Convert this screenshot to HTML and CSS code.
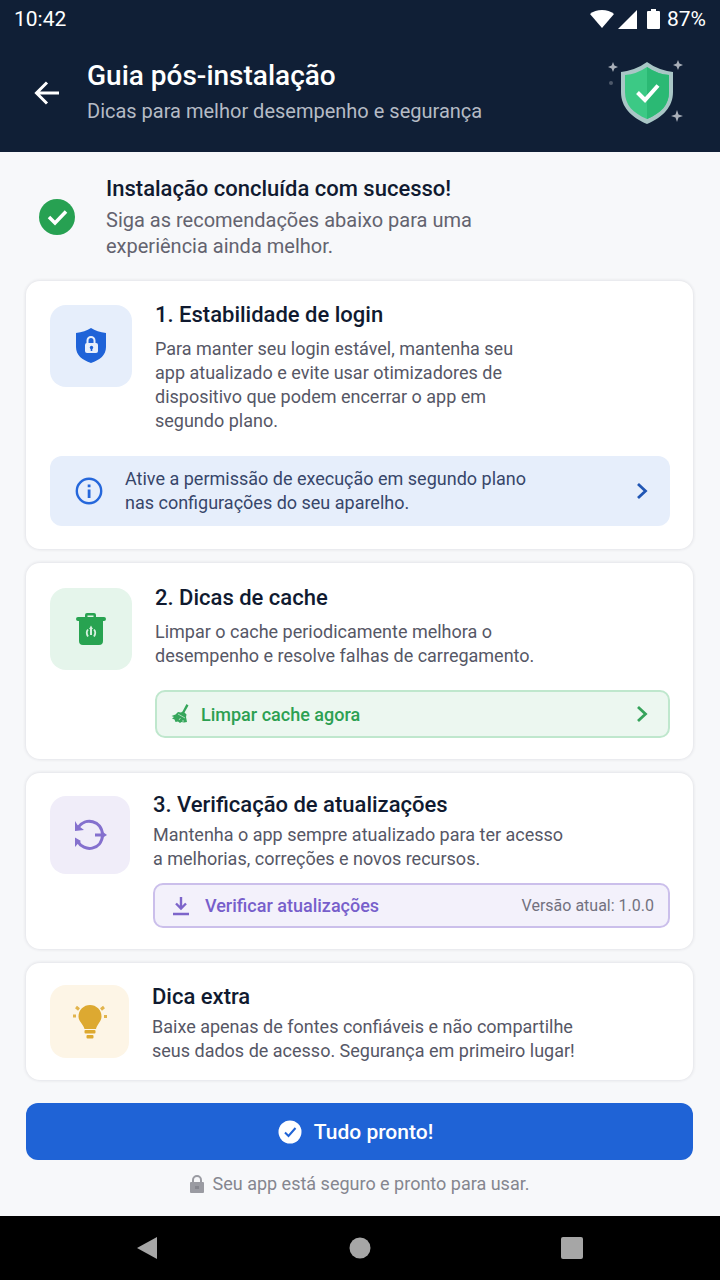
FILE: index.html
```html
<!DOCTYPE html>
<html lang="pt-BR">
<head>
    <meta charset="UTF-8">
    <meta name="viewport" content="width=device-width, initial-scale=1.0">
    <title>Guia pós-instalação</title>
    <link rel="stylesheet" href="styles.css">
</head>
<body>

<header class="top">
    <div class="status-bar">
        <span class="time">10:42</span>
        <div class="status-icons">
            <svg width="24" height="20" viewBox="0 0 24 20" fill="#fff"><path d="M0 5C6-.5 18-.5 24 5L12 19z"/></svg>
            <svg width="19" height="19" viewBox="0 0 19 19" fill="#fff"><path d="M19 0v19H0z"/></svg>
            <svg class="battery" width="13" height="20" viewBox="0 0 13 20" fill="#fff"><path d="M4 0h5v2h3q1 0 1 1v16q0 1-1 1H1q-1 0-1-1V3q0-1 1-1h3z"/></svg>
            <span>87%</span>
        </div>
    </div>
    <div class="title-bar">
        <button class="back" type="button" aria-label="Voltar">
            <svg width="26" height="24" viewBox="0 0 26 24" fill="none" stroke="#fff" stroke-width="3"><path d="M25 12H3M13 1.500L2.500 12 13 22.500"/></svg>
        </button>
        <div class="title-text">
            <h1>Guia pós-instalação</h1>
            <p>Dicas para melhor desempenho e segurança</p>
        </div>
        <svg class="hero-shield" width="80" height="70" viewBox="0 0 80 70">
            <path d="M40 4q11 8 26 10v20c0 15-10 25-26 32C24 59 14 49 14 34V14Q29 12 40 4z" fill="#a9c6c6"/>
            <path d="M40 9q10 7 22 8v17c0 13-8 21-22 27C26 55 18 47 18 34V17Q30 16 40 9z" fill="#3cc985"/>
            <path d="M40 9q10 7 22 8v17c0 13-8 21-22 27z" fill="#2bb974"/>
            <path d="M30.500 34.500l7.500 7.500 13-14.500" fill="none" stroke="#fff" stroke-width="4"/>
            <g fill="#a9afb9">
                <path d="M6 4l1.400 3.600L11 9l-3.600 1.400L6 14l-1.400-3.600L1 9l3.600-1.400z"/>
                <path d="M71 2l1.400 3.600L76 7l-3.600 1.400L71 12l-1.400-3.600L66 7l3.600-1.400z"/>
                <path d="M70 52l1.500 4.500L76 58l-4.500 1.500L70 64l-1.500-4.500L64 58l4.500-1.500z"/>
                <circle cx="4" cy="25" r="2" opacity=".4"/>
            </g>
        </svg>
    </div>
</header>

<main class="content">
    <section class="success">
        <svg width="36" height="36" viewBox="0 0 36 36"><circle cx="18" cy="18" r="18" fill="#27a152"/><path d="M10 18l6 6L27 12.500" fill="none" stroke="#fff" stroke-width="3.500"/></svg>
        <div>
            <h2>Instalação concluída com sucesso!</h2>
            <p>Siga as recomendações abaixo para uma<br>experiência ainda melhor.</p>
        </div>
    </section>

    <section class="card card-login">
        <div class="row">
            <div class="tile tile-blue">
                <svg width="32" height="36" viewBox="0 0 32 36">
                    <path d="M16 0q6 4 15 5v14c0 8-6 13-15 16C7 32 1 27 1 19V5q9-1 15-5z" fill="#1f63d8"/>
                    <rect x="10" y="15" width="13" height="10" rx="2" fill="#e8effb"/>
                    <path d="M12.500 16v-3.500a3.500 3.500 0 0 1 7 0V16" fill="none" stroke="#e8effb" stroke-width="2"/>
                    <circle cx="16.500" cy="19.500" r="1.700" fill="#1f63d8"/><path d="M15.700 20h1.600v3h-1.600z" fill="#1f63d8"/>
                </svg>
            </div>
            <div class="card-text">
                <h2>1. Estabilidade de login</h2>
                <p>Para manter seu login estável, mantenha seu<br>app atualizado e evite usar otimizadores de<br>dispositivo que podem encerrar o app em<br>segundo plano.</p>
            </div>
        </div>
        <button class="banner" type="button">
            <svg width="28" height="28" viewBox="0 0 28 28"><circle cx="14" cy="14" r="12.200" fill="none" stroke="#2567db" stroke-width="2.400"/><path d="M12.700 12.500h2.800v8.500h-2.800zM12.700 7.500h2.800v2.700h-2.800z" fill="#2567db"/></svg>
            <span>Ative a permissão de execução em segundo plano<br>nas configurações do seu aparelho.</span>
            <svg class="chevron" width="12" height="18" viewBox="0 0 12 18" fill="none" stroke="#2156b4" stroke-width="2.800"><path d="M2 2l7.500 7L2 16"/></svg>
        </button>
    </section>

    <section class="card card-cache">
        <div class="row">
            <div class="tile tile-green">
                <svg width="32" height="34" viewBox="0 0 32 34">
                    <path d="M10 5V3q0-2 2-2h7q2 0 2 2v2h8q2 0 2 2t-2 2h-1v20q0 4-4 4H8q-4 0-4-4V9H3Q1 9 1 7t2-2zM12.500 5h6V3.500h-6z" fill="#28a351"/>
                    <path d="M13 17.500q-2.500 3 0 7M19 17.500q2.500 3 0 7" fill="none" stroke="#d7f0df" stroke-width="1.800"/>
                    <path d="M16 13.500l2 3.500h-1v6h-2v-6h-1z" fill="#d7f0df"/>
                </svg>
            </div>
            <div class="card-text">
                <h2>2. Dicas de cache</h2>
                <p>Limpar o cache periodicamente melhora o<br>desempenho e resolve falhas de carregamento.</p>
                <button class="action action-green" type="button">
                    <svg width="18" height="20" viewBox="0 0 18 20" fill="#35a65b"><path d="M15.500 0L17.500 1.500 13.500 8.500l2 2-.5 2.500 1 5-3 .5-2.500-.5-1.500 1-2-1.500-2.500.5-1-2.500L1 14.500 3 13 .5 12l4-1.500L7 8l3 .5 1.500-1z"/><path d="M7 10l7 4M8 16l1.500-2M12 18v-2" stroke="#a9dab8" stroke-width="1"/></svg>
                    <span>Limpar cache agora</span>
                    <svg class="chevron" width="12" height="18" viewBox="0 0 12 18" fill="none" stroke="#36a35b" stroke-width="2.800"><path d="M2 2l7.500 7L2 16"/></svg>
                </button>
            </div>
        </div>
    </section>

    <section class="card card-update">
        <div class="row">
            <div class="tile tile-purple">
                <svg width="34" height="32" viewBox="0 0 34 32">
                    <path d="M5 8.500C12-2 29 1 29.500 16 29 31 11 34 4.500 22" fill="none" stroke="#8470ce" stroke-width="3"/>
                    <path d="M2 2l2.500 4L11 11l-9 1zM2 18.500l6 3.500-2.500 2L2 28zM22 14.500h6.500V12L34 16l-5.500 3.500v-2H22z" fill="#8470ce"/>
                </svg>
            </div>
            <div class="card-text">
                <h2>3. Verificação de atualizações</h2>
                <p>Mantenha o app sempre atualizado para ter acesso<br>a melhorias, correções e novos recursos.</p>
                <button class="action action-purple" type="button">
                    <svg width="16" height="20" viewBox="0 0 16 20" fill="none" stroke="#7d65ca" stroke-width="2.400"><path d="M8 1v11M3 7.500l5 5 5-5M0 18h16"/></svg>
                    <span>Verificar atualizações</span>
                    <small>Versão atual: 1.0.0</small>
                </button>
            </div>
        </div>
    </section>

    <section class="card card-tip">
        <div class="row">
            <div class="tile tile-yellow">
                <svg width="36" height="36" viewBox="0 0 36 36" fill="#dda931">
                    <path d="M18 1a11.500 11.500 0 0 1 11.500 11.500c0 5-4 7-5.500 12.500H12.500C11 19.500 6.500 17.500 6.500 12.500A11.500 11.500 0 0 1 18 1z"/>
                    <rect x="12.500" y="26" width="11" height="3.500" rx="1"/><rect x="14.500" y="31" width="7" height="3.500" rx="1"/>
                    <path d="M4 3l3 2.500M32 3l-3 2.500M1 12h3M32 12.500h3" fill="none" stroke="#e2b44c" stroke-width="3"/>
                </svg>
            </div>
            <div class="card-text">
                <h2>Dica extra</h2>
                <p>Baixe apenas de fontes confiáveis e não compartilhe<br>seus dados de acesso. Segurança em primeiro lugar!</p>
            </div>
        </div>
    </section>

    <button class="done" type="button">
        <svg width="24" height="24" viewBox="0 0 24 24"><circle cx="12" cy="12" r="11.500" fill="#fff"/><path d="M7 12.500l3.500 3.500L17.500 8" fill="none" stroke="#1f63d6" stroke-width="2"/></svg>
        Tudo pronto!
    </button>

    <p class="note">
        <svg width="14" height="18" viewBox="0 0 14 18"><rect x="0" y="7" width="14" height="11" rx="1" fill="#9a9ba2"/><path d="M3 8V5a4 4 0 0 1 8 0v3" fill="none" stroke="#9a9ba2" stroke-width="2"/><path d="M5 11h4v3H5z" fill="#85868e"/></svg>
        Seu app está seguro e pronto para usar.
    </p>
</main>

<nav class="nav-bar">
    <button type="button" aria-label="Voltar"><svg width="24" height="24" viewBox="0 0 24 24" fill="#a6a6a6"><path d="M21 1v22L1 12z"/></svg></button>
    <button type="button" aria-label="Início"><svg width="24" height="24" viewBox="0 0 24 24" fill="#a6a6a6"><circle cx="12" cy="12" r="10.500"/></svg></button>
    <button type="button" aria-label="Recentes"><svg width="24" height="24" viewBox="0 0 24 24" fill="#a6a6a6"><rect x="1" y="1" width="22" height="22" rx="2"/></svg></button>
</nav>

</body>
</html>
```
FILE: styles.css
```css
* {
    box-sizing: border-box;
}

body {
    margin: 0;
    min-height: 100vh;
    display: flex;
    flex-direction: column;
    font-family: Roboto, sans-serif;
    background-color: #f7f8fa;
    color: #101a30;
}

h1, h2, p {
    margin: 0;
    font-weight: 400;
}

button {
    font-family: inherit;
    border: none;
    background: none;
    padding: 0;
    cursor: pointer;
}

svg {
    display: block;
    flex-shrink: 0;
}

.top {
    background-color: #101f36;
    color: #fff;
    padding-bottom: 24px;
}

.status-bar {
    display: flex;
    justify-content: space-between;
    align-items: center;
    height: 38px;
    padding: 0 14px;
    font-size: 21px;
}

.status-icons {
    display: flex;
    align-items: center;
    gap: 4px;
}

.battery {
    margin: 0 3px 0 6px;
}

.title-bar {
    display: flex;
    align-items: center;
    padding: 20px 33px 0 34px;
}

.back {
    margin-right: 27px;
}

.title-text {
    flex: 1;
}

h1 {
    font-size: 28px;
    font-weight: 500;
    line-height: 36px;
}

.title-text p {
    font-size: 20px;
    line-height: 34px;
    color: #b5bbc5;
}

.content {
    flex: 1;
    padding: 0 27px 0 26px;
}

h2 {
    font-size: 22px;
    font-weight: 500;
    line-height: 28px;
}

.success {
    display: flex;
    align-items: center;
    gap: 31px;
    padding: 23px 13px 22px;
}

.success p {
    margin-top: 4px;
    font-size: 20px;
    line-height: 26px;
    color: #63636f;
}

.card {
    margin-bottom: 14px;
    padding: 24px 23px 23px 24px;
    background-color: #fff;
    border-radius: 14px;
    box-shadow: 0 0 3px 1px rgba(30, 35, 60, 0.09);
}

.row {
    display: flex;
    gap: 23px;
}

.tile {
    flex-shrink: 0;
    display: flex;
    align-items: center;
    justify-content: center;
    width: 82px;
    height: 82px;
    border-radius: 16px;
}

.tile-blue {
    background-color: #e6eefb;
}

.tile-green {
    background-color: #e5f5eb;
}

.tile-purple {
    width: 80px;
    height: 78px;
    background-color: #f0edf9;
}

.tile-yellow {
    width: 79px;
    height: 73px;
    background-color: #fdf5e6;
}

.card-text {
    flex: 1;
    margin-top: -4px;
}

.card-text p {
    margin-top: 8px;
    font-size: 18px;
    line-height: 24px;
    color: #565766;
}

.banner {
    display: flex;
    align-items: center;
    width: 100%;
    margin-top: 23px;
    padding: 11px 22px 11px 25px;
    gap: 22px;
    border-radius: 12px;
    background-color: #e6eefb;
    color: #37466a;
    font-size: 18px;
    line-height: 24px;
    text-align: left;
}

.chevron {
    margin-left: auto;
}

.action {
    display: flex;
    align-items: center;
    width: 100%;
    height: 48px;
    margin-top: 22px;
    border: 2px solid;
    border-radius: 10px;
    font-size: 18px;
    font-weight: 500;
}

.action-green {
    padding: 0 20px 0 14px;
    gap: 12px;
    border-color: #bfe7cd;
    background-color: #ecf7f0;
    color: #2ca052;
}

.action-purple {
    height: 45px;
    margin-top: 12px;
    padding: 0 14px 0 18px;
    gap: 16px;
    border-color: #cbbfeb;
    background-color: #f3f1fb;
    color: #775fcb;
}

.action small {
    margin-left: auto;
    font-size: 16px;
    font-weight: 400;
    color: #72717f;
}

.card-cache {
    padding: 25px 23px 21px 24px;
}

.card-update {
    padding: 23px 23px 21px 24px;
}

.card-update .card-text {
    margin-top: -5px;
}

.card-update p,
.card-tip p {
    margin-top: 4px;
}

.card-tip {
    padding: 22px 23px 17px 24px;
}

.card-tip .card-text {
    margin-top: -2px;
}

.done {
    display: flex;
    align-items: center;
    justify-content: center;
    gap: 12px;
    width: 100%;
    height: 57px;
    margin-top: 23px;
    padding-right: 8px;
    border-radius: 12px;
    background-color: #1f63d6;
    color: #fff;
    font-size: 21px;
    font-weight: 500;
}

.note {
    display: flex;
    align-items: center;
    justify-content: center;
    gap: 9px;
    padding: 12px 0 20px;
    font-size: 18px;
    line-height: 24px;
    color: #85868f;
}

.nav-bar {
    display: flex;
    justify-content: space-around;
    align-items: center;
    height: 64px;
    padding: 0 42px;
    background-color: #000;
}
```
